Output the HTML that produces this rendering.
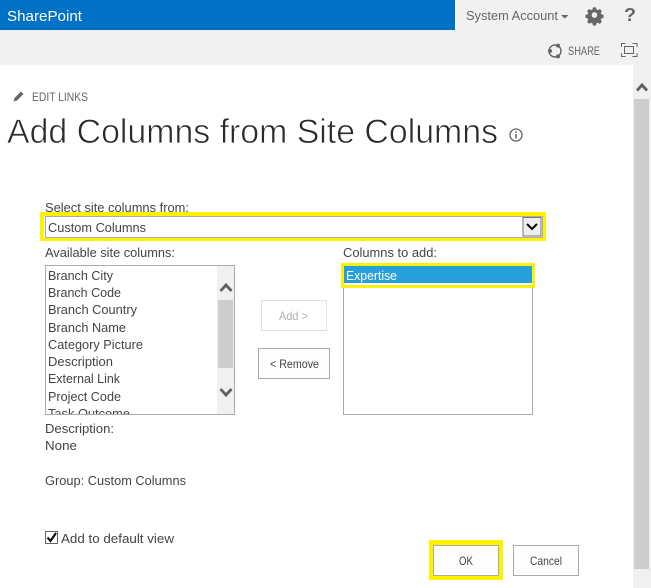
<!DOCTYPE html>
<html lang="en">
<head>
<meta charset="utf-8">
<title>Add Columns from Site Columns</title>
<style>
html,body{margin:0;padding:0;width:651px;height:588px;overflow:hidden;background:#fff}
svg{display:block}
text{font-family:"Liberation Sans",sans-serif;font-size:13px;fill:#444}
</style>
</head>
<body>
<svg width="651" height="588" viewBox="0 0 651 588" xmlns="http://www.w3.org/2000/svg">
<rect width="651" height="588" fill="#fff"/>
<!-- top bars -->
<rect width="651" height="65" fill="#f1f1f1"/>
<rect width="455" height="30" fill="#0072c6"/>
<text x="7" y="21" style="font-size:15px;fill:#fff" textLength="75" lengthAdjust="spacingAndGlyphs">SharePoint</text>
<text x="466" y="20" style="font-size:13px;fill:#666" textLength="92" lengthAdjust="spacingAndGlyphs">System Account</text>
<path d="M561 15h7.500l-3.700 3.600z" fill="#666"/>
<!-- gear -->
<g transform="translate(594.500 15)" fill="#666">
<path d="M-1.600-8h3.200l.5 2.200 1.500.7 2-1.200 2.200 2.200-1.200 2 .7 1.500 2.200.5v3.200l-2.200.5-.7 1.500 1.200 2-2.200 2.200-2-1.200-1.500.7-.5 2.200h-3.200l-.5-2.200-1.500-.7-2 1.200-2.200-2.200 1.200-2-.7-1.500-2.200-.5v-3.200l2.200-.5.7-1.500-1.200-2 2.200-2.200 2 1.200 1.500-.7zM0-3a3 3 0 1 0 0 6 3 3 0 0 0 0-6z" fill-rule="evenodd" transform="scale(.95)"/>
</g>
<text x="624" y="21" style="font-size:18px;font-weight:bold;fill:#666" textLength="12" lengthAdjust="spacingAndGlyphs">?</text>
<!-- share -->
<circle cx="555" cy="51" r="6" fill="none" stroke="#666" stroke-width="1.400"/>
<circle cx="550" cy="51" r="2" fill="#666"/>
<circle cx="558" cy="45.600" r="2" fill="#666"/>
<circle cx="558" cy="56.400" r="2" fill="#666"/>
<text x="568" y="55" style="font-size:12px;fill:#666" textLength="32" lengthAdjust="spacingAndGlyphs">SHARE</text>
<!-- focus -->
<path d="M621.500 47v-3.500h4M632.500 43.500h4.500v3.500M637 53v3.500h-4.500M625.500 56.500h-4v-3.500" fill="none" stroke="#666"/>
<rect x="624.500" y="46.500" width="9" height="7" fill="none" stroke="#666"/>
<!-- scrollbar -->
<rect x="633" y="65" width="18" height="523" fill="#f0f0f0"/>
<rect x="634" y="99" width="15" height="470" fill="#cdcdcd"/>
<path d="M637 90.500l5-5.500 5 5.500" fill="none" stroke="#606060" stroke-width="2.800"/>
<!-- edit links -->
<path d="M13.500 101.500l1-3.500 6.500-6.500 2.500 2.500-6.500 6.500z" fill="#666"/>
<text x="32" y="101" style="font-size:12px;fill:#666" textLength="56" lengthAdjust="spacingAndGlyphs">EDIT LINKS</text>
<!-- title -->
<text x="7" y="143" style="font-size:34px;fill:#2a2a2a;stroke:#fff;stroke-width:.7px" textLength="491" lengthAdjust="spacingAndGlyphs">Add Columns from Site Columns</text>
<circle cx="516" cy="135" r="6" fill="none" stroke="#666" stroke-width="1.300"/>
<rect x="515.200" y="134" width="1.600" height="4.500" fill="#666"/>
<rect x="515.200" y="131.300" width="1.600" height="1.600" fill="#666"/>
<!-- select -->
<text x="45" y="212" textLength="144" lengthAdjust="spacingAndGlyphs">Select site columns from:</text>
<rect x="40" y="212" width="506" height="29" fill="#fff200"/>
<rect x="44" y="216" width="499" height="22" fill="#fff"/>
<rect x="45.500" y="216.500" width="497" height="21" fill="#fff" stroke="#ababab"/>
<text x="48" y="232" textLength="98" lengthAdjust="spacingAndGlyphs">Custom Columns</text>
<rect x="523" y="217.500" width="18" height="18.500" fill="#eee" stroke="#777"/>
<path d="M527 224l5 5 5-5" fill="none" stroke="#000" stroke-width="2"/>
<!-- labels -->
<text x="45" y="257" textLength="130" lengthAdjust="spacingAndGlyphs">Available site columns:</text>
<text x="343" y="257" textLength="94" lengthAdjust="spacingAndGlyphs">Columns to add:</text>
<!-- left list -->
<svg x="46" y="266" width="188" height="148" viewBox="46 266 188 148">
<text x="48" y="280" textLength="65" lengthAdjust="spacingAndGlyphs">Branch City</text>
<text x="48" y="297" textLength="73" lengthAdjust="spacingAndGlyphs">Branch Code</text>
<text x="48" y="314" textLength="89" lengthAdjust="spacingAndGlyphs">Branch Country</text>
<text x="48" y="332" textLength="78" lengthAdjust="spacingAndGlyphs">Branch Name</text>
<text x="48" y="349" textLength="95" lengthAdjust="spacingAndGlyphs">Category Picture</text>
<text x="48" y="366" textLength="65" lengthAdjust="spacingAndGlyphs">Description</text>
<text x="48" y="383" textLength="72" lengthAdjust="spacingAndGlyphs">External Link</text>
<text x="48" y="401" textLength="73" lengthAdjust="spacingAndGlyphs">Project Code</text>
<text x="48" y="418" textLength="82" lengthAdjust="spacingAndGlyphs">Task Outcome</text>
<rect x="217" y="266" width="17" height="148" fill="#f0f0f0"/>
<rect x="218" y="300" width="15" height="68" fill="#cdcdcd"/>
<path d="M220.500 291l5.500-6 5.500 6" fill="none" stroke="#606060" stroke-width="2.800"/>
<path d="M220.500 389l5.500 6 5.500-6" fill="none" stroke="#606060" stroke-width="2.800"/>
</svg>
<rect x="45.500" y="265.500" width="189" height="149" fill="none" stroke="#ababab"/>
<!-- buttons -->
<rect x="261.500" y="300.500" width="65" height="30" fill="#fff" stroke="#e1e1e1"/>
<text x="279" y="320" style="font-size:12px;fill:#b1b1b1" textLength="29" lengthAdjust="spacingAndGlyphs">Add &gt;</text>
<rect x="258.500" y="348.500" width="71" height="30" fill="#fdfdfd" stroke="#ababab"/>
<text x="270" y="368" style="font-size:12px" textLength="49" lengthAdjust="spacingAndGlyphs">&lt; Remove</text>
<!-- right list -->
<rect x="343.500" y="265.500" width="189" height="149" fill="#fff" stroke="#ababab"/>
<rect x="342.500" y="264.500" width="191" height="22" fill="#fff" stroke="#fff200" stroke-width="3"/>
<rect x="344" y="266" width="188" height="17" fill="#26a0da"/>
<text x="346" y="280" style="fill:#fff" textLength="51" lengthAdjust="spacingAndGlyphs">Expertise</text>
<!-- description -->
<text x="45" y="433" textLength="69" lengthAdjust="spacingAndGlyphs">Description:</text>
<text x="45" y="450" textLength="32" lengthAdjust="spacingAndGlyphs">None</text>
<text x="45" y="485" textLength="141" lengthAdjust="spacingAndGlyphs">Group: Custom Columns</text>
<!-- checkbox -->
<rect x="45.500" y="531.500" width="12" height="12" fill="#fff" stroke="#666"/>
<path d="M47.500 537.500l3 3.500 5.500-8" fill="none" stroke="#111" stroke-width="2.200"/>
<text x="61" y="543" textLength="113" lengthAdjust="spacingAndGlyphs">Add to default view</text>
<!-- OK / cancel -->
<rect x="429" y="540" width="74" height="40" fill="#fff200"/>
<rect x="433.500" y="545.500" width="65" height="30" fill="#fdfdfd" stroke="#ababab"/>
<text x="459" y="565" style="font-size:12px" textLength="14" lengthAdjust="spacingAndGlyphs">OK</text>
<rect x="513.500" y="545.500" width="65" height="30" fill="#fdfdfd" stroke="#ababab"/>
<text x="530" y="565" style="font-size:12px" textLength="32" lengthAdjust="spacingAndGlyphs">Cancel</text>
</svg>
</body>
</html>
